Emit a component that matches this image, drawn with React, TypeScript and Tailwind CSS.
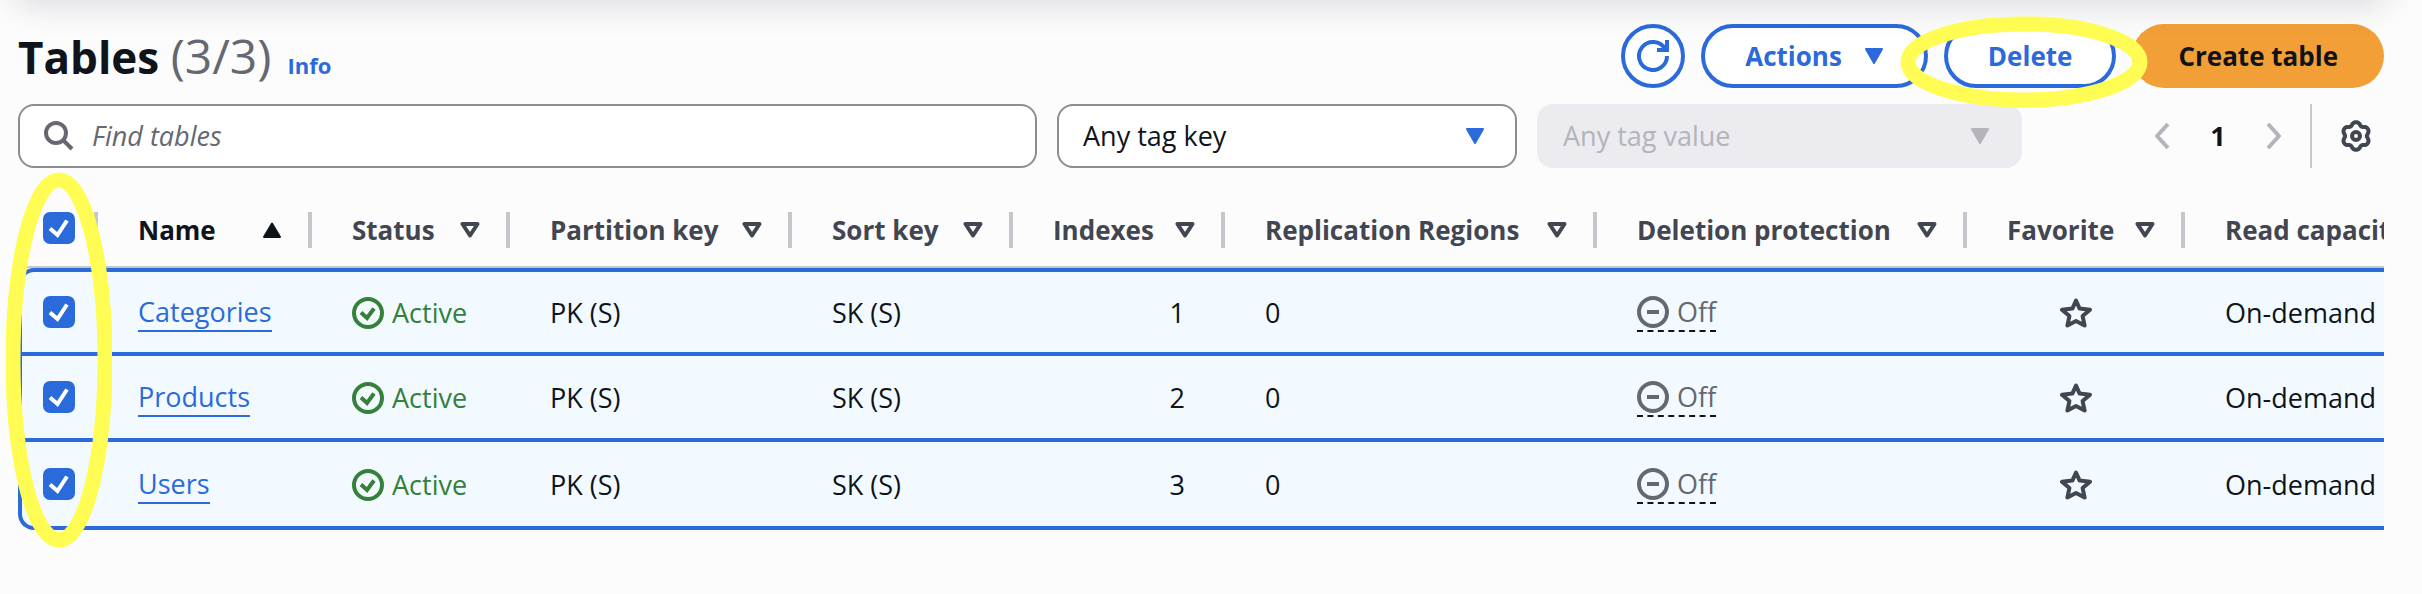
import React from 'react';

type TableItem = { name: string; indexes: number };

const items: TableItem[] = [
  { name: 'Categories', indexes: 1 },
  { name: 'Products', indexes: 2 },
  { name: 'Users', indexes: 3 },
];

const columns = [
  'Status',
  'Partition key',
  'Sort key',
  'Indexes',
  'Replication Regions',
  'Deletion protection',
  'Favorite',
];

// Outline of a gear with six rounded teeth, sampled in polar coordinates.
const gearOutline = Array.from({ length: 72 }, (_, i) => {
  const angle = (i / 72) * 2 * Math.PI;
  const radius = 12.5 + 1.5 * Math.cos(6 * angle) - 0.2 * Math.cos(12 * angle);
  const x = 16 + radius * Math.sin(angle);
  const y = 16 - radius * Math.cos(angle);
  return `${x.toFixed(2)},${y.toFixed(2)}`;
}).join(' ');

function CaretDown({ className }: { className: string }) {
  return (
    <svg viewBox="0 0 20 16" className={className} aria-hidden="true">
      <path d="M2 1h16l-8 14z" fill="currentColor" stroke="currentColor" strokeWidth="2" strokeLinejoin="round" />
    </svg>
  );
}

function SortIcon() {
  return (
    <svg viewBox="0 0 20 16" className="h-4 w-5 shrink-0" aria-hidden="true">
      <path d="M2.500 2h15L10 13.500z" fill="none" stroke="currentColor" strokeWidth="4" strokeLinejoin="round" />
    </svg>
  );
}

function SortedIcon() {
  return (
    <svg viewBox="0 0 20 16" className="h-4 w-5 shrink-0" aria-hidden="true">
      <path d="M2 15h16L10 1.500z" fill="currentColor" stroke="currentColor" strokeWidth="2" strokeLinejoin="round" />
    </svg>
  );
}

function Checkbox({ label }: { label: string }) {
  return (
    <label className="relative block size-8">
      <input
        type="checkbox"
        aria-label={label}
        defaultChecked
        className="peer block size-8 appearance-none rounded-[7px] border-2 border-[#8c8c94] bg-white checked:border-[#2b6ada] checked:bg-[#2b6ada]"
      />
      <svg
        viewBox="0 0 32 32"
        className="pointer-events-none absolute inset-0 hidden size-8 peer-checked:block"
        aria-hidden="true"
      >
        <path d="M7 16.500l7.500 6.500L24 8.500" fill="none" stroke="white" strokeWidth="4" />
      </svg>
    </label>
  );
}

function StatusIcon() {
  return (
    <svg viewBox="0 0 32 32" className="size-8 shrink-0" fill="none" stroke="currentColor" strokeWidth="4" aria-hidden="true">
      <circle cx="16" cy="16" r="14" />
      <path d="M9 15.500l6 5.500 7-9.500" />
    </svg>
  );
}

function OffIcon() {
  return (
    <svg viewBox="0 0 32 32" className="size-8 shrink-0" fill="none" stroke="currentColor" strokeWidth="4" aria-hidden="true">
      <circle cx="16" cy="16" r="14" />
      <path d="M10 16h12" />
    </svg>
  );
}

function StarIcon() {
  return (
    <svg viewBox="0 0 32 32" className="size-8" fill="none" stroke="currentColor" strokeWidth="4" strokeLinejoin="round" aria-hidden="true">
      <path d="M16 3.500l3.600 8.100 10.400 1.200-7.400 6.300 2 9.400-8.600-4.500-8.600 4.500 2-9.400L2 12.800l10.400-1.200z" />
    </svg>
  );
}

function RefreshIcon() {
  return (
    <svg viewBox="0 0 32 32" className="size-8" fill="none" stroke="currentColor" strokeWidth="4" aria-hidden="true">
      <path d="M30 16A14 14 0 1 1 28.100 9" />
      <path d="M30 0v10H20" />
    </svg>
  );
}

function SearchIcon() {
  return (
    <svg viewBox="0 0 32 32" className="size-8 shrink-0" fill="none" stroke="currentColor" strokeWidth="4" aria-hidden="true">
      <circle cx="12" cy="13" r="10" />
      <path d="M19 20l9 9" />
    </svg>
  );
}

function ChevronIcon({ d }: { d: string }) {
  return (
    <svg viewBox="0 0 16 26" className="h-[26px] w-4" fill="none" stroke="currentColor" strokeWidth="4" strokeLinejoin="round" aria-hidden="true">
      <path d={d} />
    </svg>
  );
}

function GearIcon() {
  return (
    <svg viewBox="0 0 32 32" className="size-8" fill="none" stroke="currentColor" strokeWidth="4" strokeLinejoin="round" aria-hidden="true">
      <polygon points={gearOutline} />
      <circle cx="16" cy="16" r="4" />
    </svg>
  );
}

export default function App() {
  return (
    <div className="relative min-h-screen overflow-hidden bg-[#fcfcfd] pt-6 pr-[38px] pl-[18px] font-['Open_Sans','Noto_Sans',sans-serif] text-[27px] leading-9 text-[#0f141a]">
      <div className="absolute -top-12 right-[38px] left-[18px] h-10 shadow-[0_8px_36px_2px_rgba(0,7,22,0.16)]" />

      <header className="flex h-16 items-center justify-between">
        <div className="flex items-baseline">
          <h1 className="text-[44px] leading-[64px] font-bold">
            Tables <span className="text-[48px] font-normal text-[#656871]">(3/3)</span>
          </h1>
          <a href="#info" className="ml-4 text-[22px] font-bold text-[#2b6ada]">
            Info
          </a>
        </div>
        <div className="flex gap-4 text-[26px] font-bold">
          <button
            type="button"
            aria-label="Refresh"
            className="flex size-16 items-center justify-center rounded-full border-4 border-[#2b6ada] bg-white text-[#2b6ada]"
          >
            <RefreshIcon />
          </button>
          <button
            type="button"
            className="flex h-16 items-center gap-[22px] rounded-full border-4 border-[#2b6ada] bg-white px-10 text-[#2b6ada]"
          >
            Actions
            <CaretDown className="h-4 w-5" />
          </button>
          <div className="relative">
            <button
              type="button"
              className="h-16 rounded-full border-4 border-[#2b6ada] bg-white px-10 text-[#2b6ada]"
            >
              Delete
            </button>
            <svg viewBox="0 0 248 92" className="pointer-events-none absolute -top-2 -left-11 z-10 h-[92px] w-[248px]" aria-hidden="true">
              <ellipse cx="124" cy="46" rx="116" ry="38" fill="none" stroke="#fffd54" strokeWidth="15" />
            </svg>
          </div>
          <button type="button" className="h-16 rounded-full bg-[#f29f38] px-[46px]">
            Create table
          </button>
        </div>
      </header>

      <div className="mt-4 flex items-center">
        <label className="flex h-16 flex-1 items-center gap-4 rounded-2xl border-2 border-[#8c8c94] bg-white pl-6 text-[#656871]">
          <SearchIcon />
          <input
            type="text"
            aria-label="Find tables"
            placeholder="Find tables"
            className="w-full bg-transparent outline-none placeholder:text-[#656871] placeholder:italic"
          />
        </label>
        <div className="relative ml-5 w-[460px]">
          <select
            aria-label="Tag key"
            className="block h-16 w-full appearance-none rounded-2xl border-2 border-[#8c8c94] bg-white px-6"
          >
            <option>Any tag key</option>
          </select>
          <CaretDown className="pointer-events-none absolute top-6 right-8 h-4 w-5 text-[#2b6ada]" />
        </div>
        <div className="relative ml-5 w-[485px]">
          <select
            aria-label="Tag value"
            disabled
            className="block h-16 w-full appearance-none rounded-2xl border-2 border-[#ebebf0] bg-[#ebebf0] px-6 text-[#b4b4bb] opacity-100"
          >
            <option>Any tag value</option>
          </select>
          <CaretDown className="pointer-events-none absolute top-6 right-8 h-4 w-5 text-[#b4b4bb]" />
        </div>
        <nav aria-label="Pagination" className="ml-[132px] flex items-center gap-10 text-[#b4b4bb]">
          <button type="button" disabled aria-label="Previous page">
            <ChevronIcon d="M14 1L3 13l11 12" />
          </button>
          <button type="button" aria-current="page" className="w-4 text-center font-bold text-[#0f141a]">
            1
          </button>
          <button type="button" disabled aria-label="Next page">
            <ChevronIcon d="M2 1l11 12L2 25" />
          </button>
        </nav>
        <button
          type="button"
          aria-label="Preferences"
          className="ml-7 flex h-16 items-center border-l-2 border-[#c6c6cd] pr-3 pl-7 text-[#424650]"
        >
          <GearIcon />
        </button>
      </div>

      <div className="relative">
        <div className="overflow-x-auto">
          <table className="w-full min-w-[2240px] table-fixed border-separate border-spacing-0 text-left whitespace-nowrap">
            <colgroup>
              <col className="w-[80px]" />
              <col className="w-[214px]" />
              <col className="w-[198px]" />
              <col className="w-[282px]" />
              <col className="w-[221px]" />
              <col className="w-[212px]" />
              <col className="w-[372px]" />
              <col className="w-[370px]" />
              <col className="w-[218px]" />
              <col />
            </colgroup>
            <thead className="text-[26px] text-[#424650] [&_th]:border-b-2 [&_th]:border-[#c6c6cd] [&_th]:px-0 [&_th]:pt-11 [&_th]:pb-[18px]">
              <tr>
                <th scope="col">
                  <div className="flex h-9 items-start border-r-4 border-[#c6c6cd] pl-[25px]">
                    <Checkbox label="Select all tables" />
                  </div>
                </th>
                <th scope="col" aria-sort="ascending" className="text-[#0f141a]">
                  <div className="flex h-9 items-center justify-between border-r-4 border-[#c6c6cd] pr-[26px] pl-10">
                    Name
                    <SortedIcon />
                  </div>
                </th>
                {columns.map((column) => (
                  <th key={column} scope="col">
                    <div className="flex h-9 items-center justify-between border-r-4 border-[#c6c6cd] pr-[26px] pl-10">
                      {column}
                      <SortIcon />
                    </div>
                  </th>
                ))}
                <th scope="col" className="overflow-hidden">
                  <div className="h-9 pl-10">Read capacity mode</div>
                </th>
              </tr>
            </thead>
            <tbody className="[&_td]:h-[86px] [&_td]:border-b-4 [&_td]:border-[#2b6ada] [&_td]:bg-[#f2faff] [&_td]:pt-0.5 [&_td]:pr-0 [&_td]:pb-0 [&_td]:pl-10 [&_td:first-child]:border-l-4 [&_td:first-child]:pt-0 [&_td:first-child]:pl-[21px] [&_tr:first-child_td]:h-[88px] [&_tr:first-child_td]:border-t-4 [&_tr:first-child_td:first-child]:rounded-tl-2xl [&_tr:last-child_td]:h-[88px] [&_tr:last-child_td:first-child]:rounded-bl-2xl">
              {items.map((item) => (
                <tr key={item.name}>
                  <td>
                    <Checkbox label={`Select ${item.name}`} />
                  </td>
                  <td>
                    <a href={`#${item.name}`} className="block w-fit border-b-2 border-[#2b6ada] text-[#2b6ada]">
                      {item.name}
                    </a>
                  </td>
                  <td>
                    <span className="flex items-center gap-2 text-[#35803a]">
                      <StatusIcon />
                      Active
                    </span>
                  </td>
                  <td>PK (S)</td>
                  <td>SK (S)</td>
                  <td>
                    <div className="pr-10 text-right">{item.indexes}</div>
                  </td>
                  <td>0</td>
                  <td>
                    <span className="flex w-fit items-center gap-2 border-b-2 border-dashed border-[#0f141a] text-[#656871]">
                      <OffIcon />
                      Off
                    </span>
                  </td>
                  <td>
                    <div className="flex justify-center pr-10">
                      <button type="button" aria-label={`Favorite ${item.name}`} className="text-[#424650]">
                        <StarIcon />
                      </button>
                    </div>
                  </td>
                  <td className="overflow-hidden">On-demand</td>
                </tr>
              ))}
            </tbody>
          </table>
        </div>
        <svg viewBox="0 0 106 376" className="pointer-events-none absolute top-1 -left-3 h-[376px] w-[106px]" aria-hidden="true">
          <ellipse cx="53" cy="188" rx="46" ry="180" fill="none" stroke="#fffd54" strokeWidth="15" />
        </svg>
      </div>
    </div>
  );
}
